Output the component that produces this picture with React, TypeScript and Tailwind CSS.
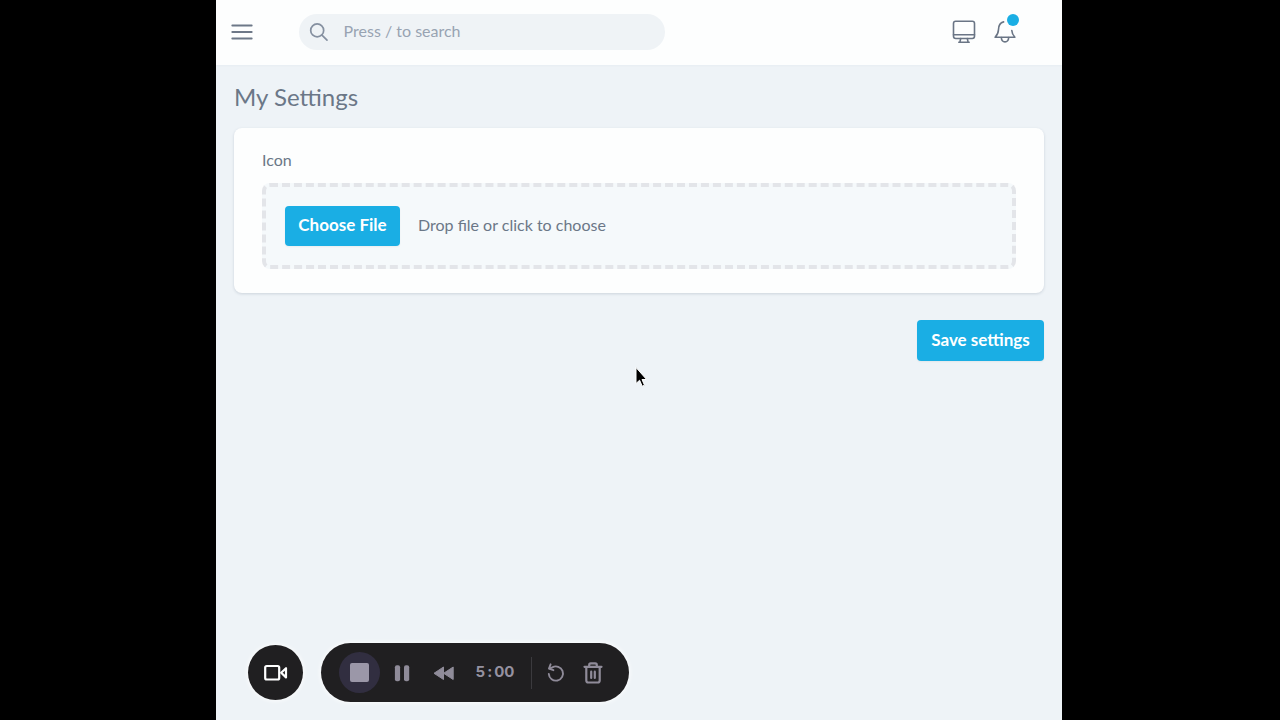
import React from "react";

function MenuIcon() {
  return (
    <svg className="block h-6 w-6" viewBox="0 0 24 24" fill="none" stroke="#6d7888" strokeWidth="1.9" strokeLinecap="round" aria-hidden="true">
      <path d="M2.3 5.5h19.4M2.3 12h19.4M2.3 18.5h19.4" />
    </svg>
  );
}

function SearchIcon() {
  return (
    <svg className="block h-6 w-6" viewBox="0 0 24 24" fill="none" stroke="#8590a0" strokeWidth="1.9" strokeLinecap="round" aria-hidden="true">
      <circle cx="10.2" cy="10.2" r="7.2" />
      <path d="m15.500 15.500 5.600 5.600" />
    </svg>
  );
}

function DisplayIcon() {
  return (
    <svg className="block h-6 w-6" viewBox="0 0 24 24" fill="none" stroke="#6a7585" strokeWidth="1.600" strokeLinecap="round" strokeLinejoin="round" aria-hidden="true">
      <rect x="1.500" y="1.300" width="21" height="17.200" rx="2.200" />
      <path d="M1.500 14.800h21M8.700 18.500l-.8 3.700M15.300 18.500l.8 3.700M6.800 22.300h10.400" />
    </svg>
  );
}

function BellIcon() {
  return (
    <svg className="block h-6 w-6" viewBox="0 0 24 24" fill="none" stroke="#6a7585" strokeWidth="1.600" strokeLinecap="round" strokeLinejoin="round" aria-hidden="true">
      <path d="M10.600 1.900C6.900 2.600 5.600 5.600 5.500 9.600c-.1 3.500-1.200 5.500-3.400 7.700h19.800c-1.900-1.900-2.900-3.900-3.100-6.800" />
      <path d="M8.300 17.500c.2 2.800 1.600 4.400 3.700 4.400s3.500-1.600 3.700-4.400" />
    </svg>
  );
}

function CameraIcon() {
  return (
    <svg className="block h-6 w-6" viewBox="0 0 24 24" fill="none" stroke="#ffffff" strokeWidth="2.200" strokeLinejoin="round" aria-hidden="true">
      <rect x="1.200" y="5" width="14" height="13.500" rx="1.500" />
      <path d="m17.200 11.800 4.800-4.600v9.200z" />
    </svg>
  );
}

function PauseIcon() {
  return (
    <svg className="block h-6 w-6" viewBox="0 0 24 24" fill="#8f8b99" aria-hidden="true">
      <rect x="4.900" y="4.200" width="5.200" height="16" rx="2" />
      <rect x="14" y="4.200" width="5.200" height="16" rx="2" />
    </svg>
  );
}

function RewindIcon() {
  return (
    <svg className="block h-6 w-6" viewBox="0 0 24 24" fill="#8f8b99" stroke="#8f8b99" strokeWidth="1" strokeLinejoin="round" aria-hidden="true">
      <path d="M11.500 6v12.500L2 12.300zM21.200 6v12.500l-9.600-6.200z" />
    </svg>
  );
}

function RestartIcon() {
  return (
    <svg className="block h-6 w-6" viewBox="0 0 24 24" fill="none" stroke="#8f8b99" strokeWidth="1.900" strokeLinecap="round" strokeLinejoin="round" aria-hidden="true">
      <path d="M4.800 13a7.100 7.100 0 1 0 3.500-6.600L5.400 7.400" />
      <path d="M6.600 3.300 5 7.500l4.400 1.700" />
    </svg>
  );
}

function TrashIcon() {
  return (
    <svg className="block h-6 w-6" viewBox="0 0 24 24" fill="none" stroke="#8f8b99" strokeWidth="2.200" strokeLinecap="round" strokeLinejoin="round" aria-hidden="true">
      <path d="M3.500 5.800h17M8.200 5.600V3.900c0-1 .5-1.500 1.500-1.500h4.600c1 0 1.500.5 1.500 1.500v1.700M5.300 6v13.500c0 1.300.7 2 2 2h9.400c1.300 0 2-.7 2-2V6M10.200 10.700v6.200M13.800 10.700v6.200" />
    </svg>
  );
}

function Header() {
  return (
    <header className="flex h-[65px] items-center bg-[#fdfefe] pr-[45px] pb-px pl-[14px] shadow-[0_1px_2px_rgba(30,50,80,0.03)]">
      <button type="button" aria-label="Open menu">
        <MenuIcon />
      </button>
      <label className="ml-[45px] flex h-9 w-[366px] items-center gap-[14px] rounded-full bg-[#eff3f6] pl-[9px]">
        <SearchIcon />
        <input
          type="search"
          aria-label="Search"
          placeholder="Press / to search"
          className="w-full min-w-0 bg-transparent pb-0.5 text-base text-[#6b7787] outline-none placeholder:text-[#98a3b2]"
        />
      </label>
      <div className="ml-auto flex items-center gap-[17px]">
        <button type="button" aria-label="Display">
          <DisplayIcon />
        </button>
        <button type="button" aria-label="Notifications" className="relative">
          <BellIcon />
          <span className="absolute -top-[6px] right-[-2px] h-3 w-3 rounded-full bg-[#1aaee4]" />
        </button>
      </div>
    </header>
  );
}

function RecorderBar() {
  return (
    <div className="mt-auto flex items-center gap-[18px] pb-[18px] pl-8">
      <button
        type="button"
        aria-label="Camera"
        className="flex h-[55px] w-[55px] items-center justify-center rounded-full bg-[#201f21] shadow-[0_0_4px_1px_rgba(255,255,255,0.8)]"
      >
        <CameraIcon />
      </button>
      <div className="flex h-[59px] items-center rounded-full bg-[#201f21] pr-6 pl-[18px] shadow-[0_0_4px_1px_rgba(255,255,255,0.8)]">
        <button type="button" aria-label="Stop" className="flex h-[41px] w-[41px] items-center justify-center rounded-full bg-[#312e40]">
          <span className="h-[19px] w-[19px] rounded-xs bg-[#9b97a8]" />
        </button>
        <button type="button" aria-label="Pause" className="ml-[10px]">
          <PauseIcon />
        </button>
        <button type="button" aria-label="Rewind" className="ml-[18px]">
          <RewindIcon />
        </button>
        <span className="ml-5 flex w-[38px] justify-center font-['Inter',sans-serif] text-[15px] font-bold text-[#9591a0]">
          <span>5</span>
          <span className="px-0.5">:</span>
          <span>00</span>
        </span>
        <span className="ml-[17px] h-8 w-px bg-[#3b3a3e]" />
        <button type="button" aria-label="Restart" className="ml-3">
          <RestartIcon />
        </button>
        <button type="button" aria-label="Delete" className="ml-[13px]">
          <TrashIcon />
        </button>
      </div>
    </div>
  );
}

export default function App() {
  return (
    <div className="relative grid min-h-screen grid-cols-[216fr_846fr_218fr] bg-black font-['Lato',sans-serif]">
      <div className="col-start-2 flex min-w-0 flex-col bg-[#eef3f7]">
        <Header />
        <main className="px-[18px] pt-4">
          <h1 className="text-2xl leading-8 text-[#6b7787]">My Settings</h1>
          <section className="mt-[15px] rounded-lg bg-[#fdfefe] px-7 pt-5 pb-6 shadow-[0_1px_3px_rgba(30,50,80,0.16)]">
            <label htmlFor="icon-button" className="block text-base leading-6 text-[#6b7787]">
              Icon
            </label>
            <div className="mt-[11px] flex items-center gap-[18px] rounded-lg border-4 border-dashed border-[#e3e5e9] bg-[#f5f9fb] px-[19px] py-[19px]">
              <button
                id="icon-button"
                type="button"
                className="h-10 w-[115px] rounded bg-[#1aaee4] pb-0.5 text-[17px] font-bold whitespace-nowrap text-white shadow-xs"
              >
                Choose File
              </button>
              <p className="pb-0.5 text-base text-[#6b7787]">Drop file or click to choose</p>
            </div>
          </section>
          <div className="mt-[27px] flex justify-end">
            <button type="button" className="h-[41px] w-[127px] rounded bg-[#1aaee4] pb-0.5 text-[17px] font-bold whitespace-nowrap text-white shadow-xs">
              Save settings
            </button>
          </div>
        </main>
        <RecorderBar />
      </div>
      <svg className="pointer-events-none absolute top-[366px] left-[634px] h-6 w-4" viewBox="0 0 16 24" aria-hidden="true">
        <path d="M2 1.500v16l3.600-3.300 2.600 6 2.300-1-2.500-5.700h4.600z" fill="#000" stroke="#fff" strokeWidth="1" strokeLinejoin="round" />
      </svg>
    </div>
  );
}
